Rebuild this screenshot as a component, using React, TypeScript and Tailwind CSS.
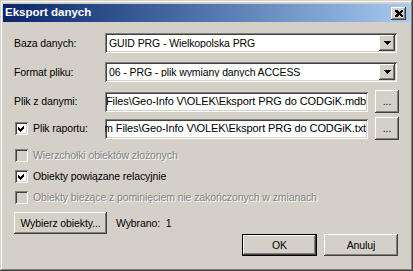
import type { ReactNode } from 'react';

const raised =
  'bg-[#d4d0c8] shadow-[inset_-1px_-1px_#404040,inset_1px_1px_#ffffff,inset_-2px_-2px_#808080,inset_2px_2px_#d4d0c8]';
const sunken =
  'shadow-[inset_1px_1px_#808080,inset_-1px_-1px_#ffffff,inset_2px_2px_#404040,inset_-2px_-2px_#d4d0c8]';
const disabledText = 'text-[#808080] [text-shadow:1px_1px_0_#ffffff]';

function Combo({ value }: { value: string }) {
  return (
    <div className={`w-[292px] h-[20px] bg-white ${sunken} flex items-center p-[2px]`}>
      <span className="flex-1 pl-[2px] whitespace-nowrap overflow-hidden">{value}</span>
      <span className={`w-[16px] h-[16px] ${raised} flex items-center justify-center`}>
        <svg width="7" height="4" viewBox="0 0 7 4" shapeRendering="crispEdges">
          <path d="M0 0h7v1h-1v1h-1v1h-1v1h-1v-1h-1v-1h-1v-1h-1z" fill="#000" />
        </svg>
      </span>
    </div>
  );
}

function PathField({ value }: { value: string }) {
  return (
    <div className={`w-[263px] h-[20px] bg-white ${sunken} flex items-center justify-end px-[2px] overflow-hidden`}>
      <span className="whitespace-nowrap shrink-0 text-[11px]">{value}</span>
    </div>
  );
}

function Button({ children, className }: { children: ReactNode; className: string }) {
  return <div className={`${raised} flex items-center justify-center ${className}`}>{children}</div>;
}

function Check({ checked, disabled }: { checked?: boolean; disabled?: boolean }) {
  return (
    <span className={`w-[13px] h-[13px] shrink-0 flex ${disabled ? 'bg-[#d4d0c8]' : 'bg-white'} ${sunken}`}>
      {checked && (
        <svg width="13" height="13" viewBox="0 0 13 13" shapeRendering="crispEdges">
          <path d="M3 5L5 7L9 3L9 6L5 10L3 8Z" fill={disabled ? '#808080' : '#000'} />
        </svg>
      )}
    </span>
  );
}

function CheckRow({ label, checked, disabled }: { label: string; checked?: boolean; disabled?: boolean }) {
  return (
    <div className="h-[21px] flex items-center pl-[12px] gap-[5px]">
      <Check checked={checked} disabled={disabled} />
      <span className={disabled ? disabledText : ''}>{label}</span>
    </div>
  );
}

export default function App() {
  return (
    <div
      className="w-[413px] h-[271px] bg-[#d4d0c8] p-[3px] flex flex-col text-[10.5px] tracking-[-0.1px] leading-none text-black font-['Liberation_Sans',Arial,sans-serif] shadow-[inset_-1px_-1px_#404040,inset_1px_1px_#d4d0c8,inset_-2px_-2px_#808080,inset_2px_2px_#ffffff]"
    >
      {/* Title bar */}
      <div className="mt-[1px] h-[18px] bg-linear-to-r from-[#0a246a] to-[#a6caf0] flex items-center pl-[2px] pr-[4px]">
        <span className="flex-1 text-white font-bold text-[11.5px] tracking-normal">Eksport danych</span>
        <span className={`w-[15px] h-[13px] ${raised} flex items-center justify-center`}>
          <svg width="8" height="7" viewBox="0 0 8 7" shapeRendering="crispEdges">
            <path d="M0 0h2l2 2 2-2h2v1l-2 2.5 2 2.5v1h-2l-2-2-2 2h-2v-1l2-2.5-2-2.5z" fill="#000" />
          </svg>
        </span>
      </div>

      {/* Form */}
      <div className="mt-[11px] h-[20px] flex items-center">
        <span className="w-[102px] pl-[11px]">Baza danych:</span>
        <Combo value="GUID PRG - Wielkopolska PRG" />
      </div>
      <div className="mt-[9px] h-[20px] flex items-center">
        <span className="w-[102px] pl-[11px]">Format pliku:</span>
        <Combo value="06 - PRG - plik wymiany danych ACCESS" />
      </div>
      <div className="mt-[8px] h-[23px] flex items-center">
        <span className="w-[102px] pl-[11px]">Plik z danymi:</span>
        <PathField value="Files\Geo-Info V\OLEK\Eksport PRG do CODGiK.mdb" />
        <Button className="ml-[7px] w-[24px] h-[23px]">...</Button>
      </div>
      <div className="mt-[4px] h-[23px] flex items-center">
        <span className="w-[102px] pl-[12px] flex items-center gap-[5px]">
          <Check checked />
          <span>Plik raportu:</span>
        </span>
        <PathField value="m Files\Geo-Info V\OLEK\Eksport PRG do CODGiK.txt" />
        <Button className="ml-[7px] w-[24px] h-[23px]">...</Button>
      </div>

      <div className="mt-[5px] flex flex-col">
        <CheckRow label="Wierzchołki obiektów złożonych" disabled />
        <CheckRow label="Obiekty powiązane relacyjnie" checked />
        <CheckRow label="Obiekty bieżące z pominięciem nie zakończonych w zmianach" disabled />
      </div>

      <div className="mt-[4px] h-[22px] flex items-center pl-[11px]">
        <Button className="w-[93px] h-[22px]">Wybierz obiekty...</Button>
        <span className="ml-[9px]">Wybrano:&nbsp;&nbsp;1</span>
      </div>

      <div className="h-[22px] flex justify-end gap-[7px] pr-[12px]">
        <div className="w-[75px] h-[22px] border border-black flex">
          <Button className="flex-1">OK</Button>
        </div>
        <Button className="w-[74px] h-[22px]">Anuluj</Button>
      </div>
    </div>
  );
}
